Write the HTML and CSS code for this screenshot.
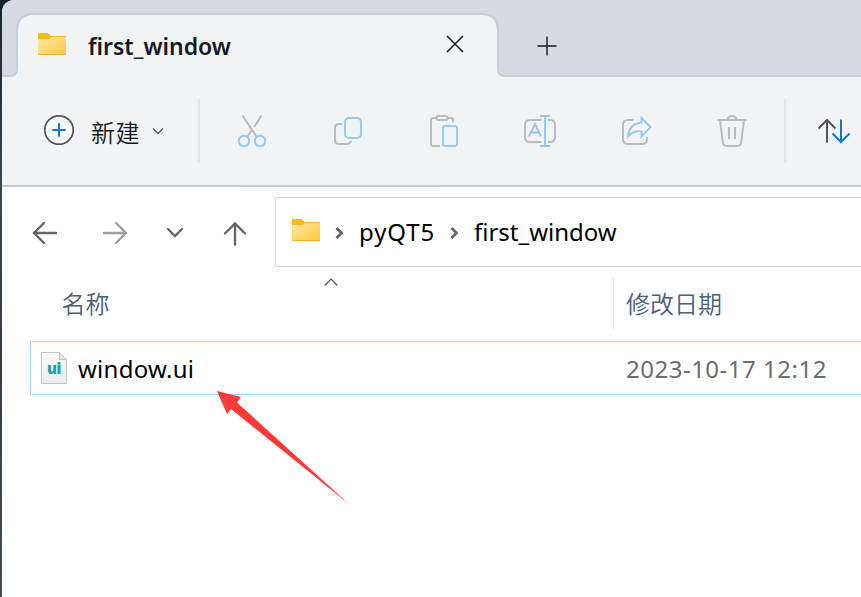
FILE: index.html
```html
<!DOCTYPE html>
<html lang="zh-CN">
<head>
<meta charset="utf-8">
<title>first_window</title>
<link rel="stylesheet" href="styles.css">
</head>
<body>
<svg class="defs" width="0" height="0" aria-hidden="true">
  <defs>
    <linearGradient id="folder-face" x1="0" y1="0" x2="1" y2="1"><stop offset="0" stop-color="#ffe8a3"/><stop offset="1" stop-color="#ffca3e"/></linearGradient>
    <linearGradient id="page-face" x1="0" y1="0" x2="0" y2="1"><stop offset="0" stop-color="#fafafa"/><stop offset="1" stop-color="#ececf0"/></linearGradient>
    <symbol id="folder" viewBox="0 0 28 22">
      <path d="M0 10V1Q0 0 1 0H9Q10.500 0 11.500 1.500L12.500 3H27Q28 3 28 4V10Z" fill="#f9b91b"/>
      <path d="M0 6H9.500Q11 6 12 4.800L12.800 4H28V21Q28 22 27 22H1Q0 22 0 21Z" fill="url(#folder-face)"/>
      <path d="M.3 21.500H27.700" stroke="#edae27"/>
    </symbol>
  </defs>
</svg>
<div class="window">
  <header class="tabs">
    <svg class="tab-shape" viewBox="2 0 859 77" width="859" height="77"><path d="M1 78V76H10Q17 76 17 69V31Q17 14 34 14H481Q498 14 498 31V69Q498 76 505 76H863V78Z" fill="#f0f4f6" stroke="#c6cfd6" stroke-width="2"/></svg>
    <div class="tab">
      <svg class="folder"><use href="#folder"/></svg>
      <span class="tab-title">first_window</span>
      <svg class="close" viewBox="0 0 18 18"><path d="M1 1L17 17M17 1L1 17"/></svg>
    </div>
    <svg class="add" viewBox="0 0 20 20"><path d="M10 .5V19.500M.5 10H19.500"/></svg>
  </header>
  <div class="toolbar">
    <div class="new">
      <svg class="plus" viewBox="43 114 32 32"><circle cx="59" cy="130" r="14.200" fill="#fafbfb" stroke="#555" stroke-width="1.700"/><path d="M59 123.300V136.700M52.300 130H65.700" stroke="#0078d4" stroke-width="2"/></svg>
      <span class="new-text">新建</span>
      <svg class="small-chevron" viewBox="0 0 12 8"><path d="M1 1.500L6 6.500L11 1.500"/></svg>
    </div>
    <i class="rule"></i>
    <div class="tools">
      <svg viewBox="234 113 36 36"><g class="gray"><path d="M242.500 115.500L256.800 137M261.500 115.500L254.200 127M251.500 130.500L247.200 137"/></g><g class="blue"><circle cx="244" cy="141" r="5.200"/><circle cx="260" cy="141" r="5.200"/></g></svg>
      <svg viewBox="330 113 36 36"><g class="gray"><path d="M342 124H339Q335 124 335 128V140Q335 144 339 144H346.500Q350 144 351 141"/></g><rect class="blue" x="345" y="118" width="16" height="20" rx="4"/></svg>
      <svg viewBox="426 113 36 36"><g class="gray"><path d="M436.500 118H433Q431 118 431 120V144Q431 146 433 146H440M447.500 118H451Q453 118 453 120V122.500"/><rect x="436.500" y="116" width="11" height="4" rx="2"/></g><rect class="blue" x="443" y="126" width="14" height="20" rx="2"/></svg>
      <svg viewBox="522 113 36 36"><g class="gray"><path d="M541.500 120H530Q525 120 525 125V137Q525 142 530 142H541.500M548 120H550Q555 120 555 125V137Q555 142 550 142H548"/></g><g class="blue"><path d="M540 116H550M545 116V146M540 146H550M529 136.500L535 124L541 136.500M531.200 132.500H538.800"/></g></svg>
      <svg viewBox="618 113 36 36"><g class="gray"><path d="M633.500 120H628Q623 120 623 125V139Q623 144 628 144H642Q647 144 647 139V137"/></g><path class="blue" d="M641.500 118L650.500 127L641.500 136.500V131.500Q633 130.500 628 136.500Q629 124 641.500 122.500Z"/></svg>
      <svg viewBox="714 113 36 36"><g class="gray"><path d="M717.500 120H746.500M720 120L722.800 142.500Q723.200 146 726.500 146H737.500Q740.800 146 741.200 142.500L744 120M727.500 120Q728 116 732 116Q736 116 736.500 120M729 127V139M735 127V139"/></g></svg>
    </div>
    <i class="rule"></i>
    <svg class="sort" viewBox="815 115 38 32"><path d="M827 142.500V120M818.500 128.500L827 120L835.500 128.500" stroke="#555"/><path d="M841 119.500V142M832.500 133.500L841 142L849.500 133.500" stroke="#0078d4"/></svg>
  </div>
  <div class="navigation">
    <div class="buttons">
      <svg viewBox="31 219 28 28"><path d="M56 233H34M44 223L34 233L44 243"/></svg>
      <svg class="inactive" viewBox="101 219 28 28"><path d="M104 233H126M116 223L126 233L116 243"/></svg>
      <svg class="recent" viewBox="165 219 20 28"><path d="M168 229L175 236L182 229"/></svg>
      <svg viewBox="221 219 28 28"><path d="M235 244.500V223.500M225 233.500L235 223.500L245 233.500"/></svg>
    </div>
    <div class="address">
      <svg class="folder"><use href="#folder"/></svg>
      <svg class="crumb" viewBox="0 0 8 12"><path d="M1.500 1L6.500 6L1.500 11"/></svg>
      <span class="parent">pyQT5</span>
      <svg class="crumb" viewBox="0 0 8 12"><path d="M1.500 1L6.500 6L1.500 11"/></svg>
      <span class="current">first_window</span>
    </div>
  </div>
  <main class="files">
    <div class="columns">
      <div class="name-column"><span>名称</span><svg class="sorted" viewBox="0 0 14 8"><path d="M.7 7.500L7 1L13.300 7.500"/></svg></div>
      <div class="date-column">修改日期</div>
    </div>
    <div class="file">
      <svg class="file-icon" viewBox="41 352 26 33"><path d="M41.500 352.500H59.500L66.500 359.500V383.500H41.500Z" fill="url(#page-face)" stroke="#c5c5c5"/><path d="M59.500 352.500V359.500H66.500Z" fill="#e5e5e5" stroke="#c5c5c5"/><text x="47" y="373.500" class="badge">ui</text></svg>
      <span class="filename">window.ui</span>
      <time>2023-10-17 12:12</time>
    </div>
  </main>
  <svg class="pointer" viewBox="216 390 136 116"><path d="M217 391L241 397L237 402.500L349.500 504.500L231 409L227 414Z" fill="#ff3838"/></svg>
</div>
</body>
</html>
```
FILE: styles.css
```css
* { box-sizing: border-box; }
body {
  margin: 0;
  width: 861px;
  height: 597px;
  padding-left: 2px;
  overflow: hidden;
  background: linear-gradient(#16242e, #3b454d 30%, #343c43 60%, #454d53);
  font-family: "Noto Sans", "Noto Sans CJK SC", sans-serif;
  font-size: 24px;
  color: #000;
}
svg { display: block; flex: none; fill: none; }
span, time { white-space: nowrap; }
.defs { position: absolute; }
.window { position: relative; height: 597px; overflow: hidden; border-radius: 12px 0 0; background: #fff; }
.tabs { position: relative; display: flex; height: 77px; background: #d4dbe2; }
.tab-shape { position: absolute; inset: 0; }
.tab { position: relative; display: flex; width: 496px; height: 77px; padding-left: 36px; }
.folder { width: 28px; height: 22px; }
.tab .folder { margin-top: 33px; }
.tab-title { width: 140px; margin: 30px 0 0 22px; line-height: 33px; font-size: 23px; font-weight: 570; letter-spacing: 0; color: #191919; }
.close { width: 18px; height: 18px; margin: 35px 0 0 218px; stroke: #191919; stroke-width: 1.5; }
.add { position: relative; width: 20px; height: 20px; margin: 36px 0 0 39px; stroke: #191919; stroke-width: 1.4; }
.toolbar { display: flex; height: 110px; border-bottom: 2px solid #c4cbd2; background: linear-gradient(90deg, #f0f4f6 25%, #f2f3f7 80%); }
.new { display: flex; width: 196px; padding-left: 41px; }
.plus { width: 32px; height: 32px; margin-top: 37px; }
.new-text { width: 49px; margin: 38px 0 0 16px; line-height: 34px; color: #191919; font-family: "Noto Sans CJK SC", sans-serif; font-weight: 350; letter-spacing: .4px; }
.small-chevron { width: 12px; height: 8px; margin: 50px 0 0 12px; stroke: #555; stroke-width: 1.3; }
.rule { width: 2px; height: 64px; margin-top: 22px; background: #e1e5e8; }
.tools { display: grid; grid-template-columns: repeat(6, 96px); margin: 36px 4px 0; justify-items: center; }
.tools svg { width: 36px; height: 36px; }
.gray { stroke: #b9bbbc; stroke-width: 2; }
.blue { stroke: #99c8eb; stroke-width: 2; }
.sort { width: 38px; height: 32px; margin: 38px 0 0 29px; stroke-width: 2; }
.navigation { display: flex; height: 80px; padding-top: 10px; }
.buttons { display: flex; width: 273px; padding: 22px 0 0 29px; }
.buttons svg { width: 28px; height: 28px; stroke: #666; stroke-width: 2.4; stroke-linecap: round; }
.buttons .inactive { margin-left: 42px; stroke: #9e9e9e; }
.buttons .recent { width: 20px; margin: 0 36px; }
.address { display: flex; flex: 1; height: 70px; padding-left: 16px; border: 1px solid #d9d9d9; border-right: 0; }
.address .folder { margin-top: 21px; }
.crumb { width: 8px; height: 12px; margin: 29px 0 0 15px; stroke: #666; stroke-width: 2.8; }
.parent, .current { margin: 17px 0 0 16px; line-height: 33px; }
.parent { width: 76px; letter-spacing: .9px; }
.current { letter-spacing: 0; }
.files { display: block; }
.columns { display: flex; height: 74px; color: #4c607a; font-family: "Noto Sans CJK SC", sans-serif; font-weight: 350; line-height: 34px; }
.name-column { display: flex; width: 612px; height: 51px; margin-top: 11px; padding: 8px 0 0 59.5px; border-right: 1px solid #e2e2e2; }
.sorted { width: 14px; height: 8px; margin: -8px 0 0 214.5px; stroke: #555; stroke-width: 1.2; }
.date-column { padding: 19px 0 0 12px; }
.file { display: flex; height: 54px; margin-left: 28px; padding-left: 10px; border: 1px solid #99d1ff; border-right: 0; border-radius: 2px 0 0 2px; }
.file-icon { width: 26px; height: 33px; margin-top: 10px; }
.badge { fill: #249cac; font: 800 15px "Open Sans", sans-serif; letter-spacing: -.5px; }
.filename { flex: none; width: 548px; margin: 10px 0 0 11px; line-height: 33px; letter-spacing: .25px; }
.file time { margin-top: 10px; line-height: 33px; letter-spacing: .5px; color: #6d6d6d; }
.pointer { position: absolute; left: 214px; top: 390px; width: 136px; height: 116px; }
```
